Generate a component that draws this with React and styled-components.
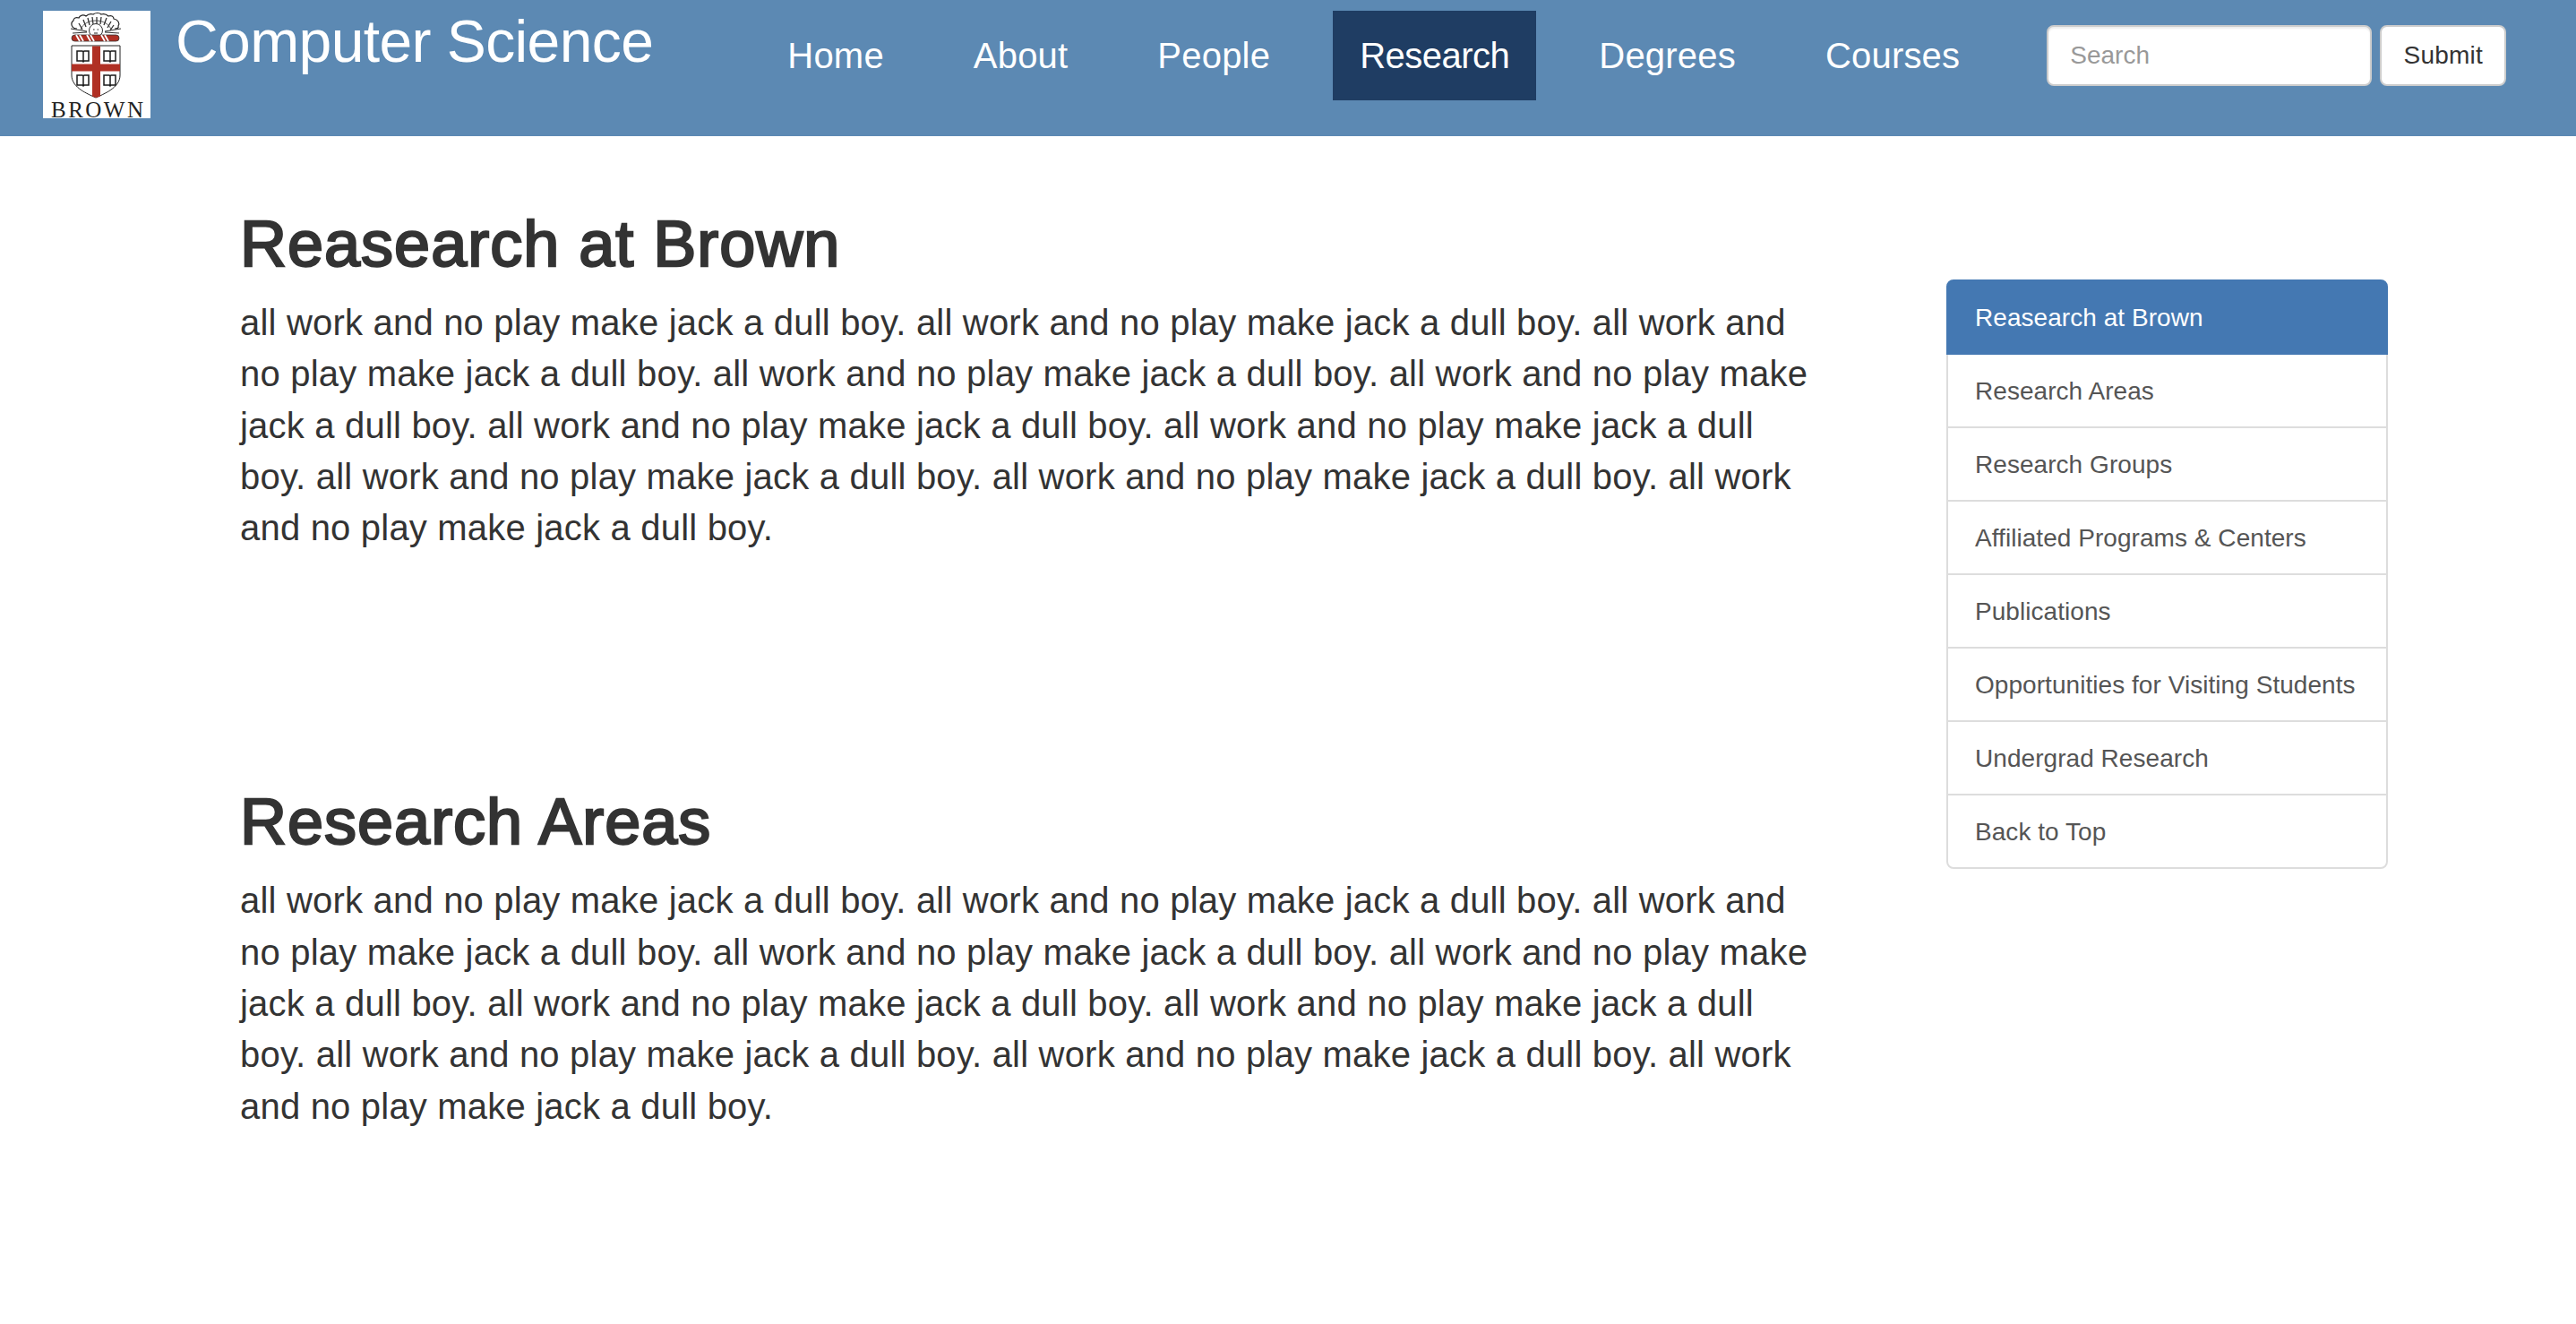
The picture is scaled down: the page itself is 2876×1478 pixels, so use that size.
import React from "react";
import styled, { createGlobalStyle } from "styled-components";

const GlobalStyle = createGlobalStyle`
  html, body {
    margin: 0;
    padding: 0;
    background: #fff;
    font-family: "Liberation Sans", Arial, sans-serif;
    color: #333;
  }
  * {
    box-sizing: border-box;
  }
`;

const Header = styled.header`
  display: flex;
  align-items: flex-start;
  height: 152px;
  padding: 12px 0 0 48px;
  background-color: #5c89b3;
`;
const LogoBox = styled.a`
  display: block;
  width: 120px;
  height: 120px;
  background: #fff;
  flex-shrink: 0;
`;
const Brand = styled.a`
  margin: -2px 0 0 28px;
  font-size: 66px;
  line-height: 72px;
  letter-spacing: -0.6px;
  color: #fff;
  white-space: nowrap;
`;
const NavList = styled.nav`
  display: flex;
  gap: 40px;
  margin-left: 120px;
`;
const NavLink = styled.a`
  display: block;
  height: 100px;
  padding: 0 30px;
  font-size: 40px;
  line-height: 100px;
  letter-spacing: ${(p) => (p.$active ? "-0.5px" : "0.2px")};
  color: #fff;
  background-color: ${(p) => (p.$active ? "#1f3d63" : "transparent")};
`;
const SearchForm = styled.form`
  display: flex;
  gap: 9px;
  margin: 16px 0 0 67px;
`;
const SearchInput = styled.input`
  width: 363px;
  height: 68px;
  padding: 0 24px;
  font-family: inherit;
  font-size: 28px;
  color: #555;
  background: #fff;
  border: 2px solid #ccc;
  border-radius: 8px;
  box-shadow: inset 0 2px 2px rgba(0, 0, 0, 0.075);
  &::placeholder {
    color: #999;
    opacity: 1;
  }
`;
const SubmitButton = styled.button`
  width: 141px;
  height: 68px;
  padding: 0;
  font-family: inherit;
  font-size: 28px;
  letter-spacing: 0.2px;
  color: #333;
  background: #fff;
  border: 2px solid #ccc;
  border-radius: 8px;
`;

const Main = styled.main`
  display: flex;
  align-items: flex-start;
  padding: 81px 0 0 268px;
`;
const Articles = styled.div`
  display: flex;
  flex-direction: column;
  gap: 260px;
  width: 1760px;
  flex-shrink: 0;
`;
const Heading = styled.h1`
  margin: 0 0 20px;
  font-size: 72px;
  font-weight: 400;
  line-height: 79px;
  letter-spacing: 1px;
  color: #333;
  -webkit-text-stroke: 2.4px #333;
`;
const Paragraph = styled.p`
  margin: 0;
  font-size: 40px;
  line-height: 57.3px;
  letter-spacing: 0.2px;
  color: #333;
`;
const SideList = styled.div`
  display: flex;
  flex-direction: column;
  width: 493px;
  margin: 79px 0 0 145px;
  flex-shrink: 0;
`;
const SideItem = styled.a`
  display: block;
  padding: 21px 30px 19px;
  margin-bottom: -2px;
  font-size: 28px;
  line-height: 40px;
  letter-spacing: 0.05px;
  color: ${(p) => (p.$active ? "#fff" : "#555")};
  background-color: ${(p) => (p.$active ? "#4478b2" : "#fff")};
  border: 2px solid ${(p) => (p.$active ? "#4478b2" : "#ddd")};
  position: relative;
  z-index: ${(p) => (p.$active ? 1 : 0)};
  &:first-child {
    border-radius: 8px 8px 0 0;
  }
  &:last-child {
    margin-bottom: 0;
    border-radius: 0 0 8px 8px;
  }
`;

const BrownLogo = () => (
  <svg width="120" height="120" viewBox="0 0 120 120">
    {/* cloud */}
    <path
      d="M38 20c-6 0-8-6-4-9 0-3 3-4 6-3 1-3 5-4 8-2 2-2 5-3 8-2 3-2 7-2 9 0 3-1 6 0 8 2 3-1 6 0 6 3 5 1 7 5 5 8 1 2-1 3-4 3"
      fill="none"
      stroke="#222"
      strokeWidth="1.2"
    />
    {/* sun rays and face */}
    <path d="M44 21l-4-7M48 18l-3-8M52 16l-2-8M56 15l-1-8M60 15V7M64 15l1-8M68 16l3-8M72 19l4-7M75 22l4-6" stroke="#333" strokeWidth="1.300" />
    <path d="M42 21c2-6 9-10 17-10s15 4 17 10" fill="none" stroke="#333" strokeWidth="0.8" />
    <path d="M31 20l18 3M33 25l16-1M87 20l-18 3M85 25l-16-1" stroke="#333" strokeWidth="1.2" />
    <circle cx="59" cy="22" r="7.500" fill="#fff" stroke="#333" strokeWidth="1" />
    <path d="M56 21h1.600M60.500 21h1.600M57 25h4" stroke="#222" strokeWidth="1.1" />
    {/* wreath */}
    <rect x="32" y="27" width="53" height="7" rx="3.500" fill="#b03024" stroke="#333" strokeWidth="0.8" />
    <path
      d="M37 27l4 7M41 27l4 7M49 27l4 7M53 27l4 7M65 27l4 7M69 27l4 7"
      stroke="#fff"
      strokeWidth="1.8"
    />
    {/* shield */}
    <path d="M32 39h54v33c0 12-13 19-27 25-14-6-27-13-27-25z" fill="#fff" stroke="#222" strokeWidth="1" />
    <path d="M55 39.500h9v20h22v8h-22v28l-4.500 1.500-4.500-1.500v-28h-23v-8h23z" fill="#b03024" />
    {/* books */}
    <g fill="#fff" stroke="#1a1a1a" strokeWidth="1.5">
      <path d="M38 45h6l1 1 1-1h5v11h-5l-1 1-1-1h-6zM45 46v10" />
      <path d="M68 45h6l1 1 1-1h5v11h-5l-1 1-1-1h-6zM75 46v10" />
      <path d="M38 72h6l1 1 1-1h5v11h-5l-1 1-1-1h-6zM45 73v10" />
      <path d="M68 72h6l1 1 1-1h5v11h-5l-1 1-1-1h-6zM75 73v10" />
    </g>
    <text
      x="9"
      y="119"
      fontFamily="'Liberation Serif', serif"
      fontSize="25"
      textLength="103"
      lengthAdjust="spacing"
      fill="#222"
    >
      BROWN
    </text>
  </svg>
);

const navItems = ["Home", "About", "People", "Research", "Degrees", "Courses"];
const sideItems = [
  "Reasearch at Brown",
  "Research Areas",
  "Research Groups",
  "Affiliated Programs & Centers",
  "Publications",
  "Opportunities for Visiting Students",
  "Undergrad Research",
  "Back to Top",
];
const filler = Array(10).fill("all work and no play make jack a dull boy.").join(" ");

const App = () => {
  return (
    <>
      <GlobalStyle />
      <Header>
        <LogoBox>
          <BrownLogo />
        </LogoBox>
        <Brand>Computer Science</Brand>
        <NavList>
          {navItems.map((item) => (
            <NavLink key={item} $active={item === "Research"}>
              {item}
            </NavLink>
          ))}
        </NavList>
        <SearchForm onSubmit={(e) => e.preventDefault()}>
          <SearchInput type="text" placeholder="Search" />
          <SubmitButton type="submit">Submit</SubmitButton>
        </SearchForm>
      </Header>
      <Main>
        <Articles>
          <section>
            <Heading>Reasearch at Brown</Heading>
            <Paragraph>{filler}</Paragraph>
          </section>
          <section>
            <Heading>Research Areas</Heading>
            <Paragraph>{filler}</Paragraph>
          </section>
        </Articles>
        <SideList>
          {sideItems.map((item, i) => (
            <SideItem key={item} $active={i === 0}>
              {item}
            </SideItem>
          ))}
        </SideList>
      </Main>
    </>
  );
};

export default App;
